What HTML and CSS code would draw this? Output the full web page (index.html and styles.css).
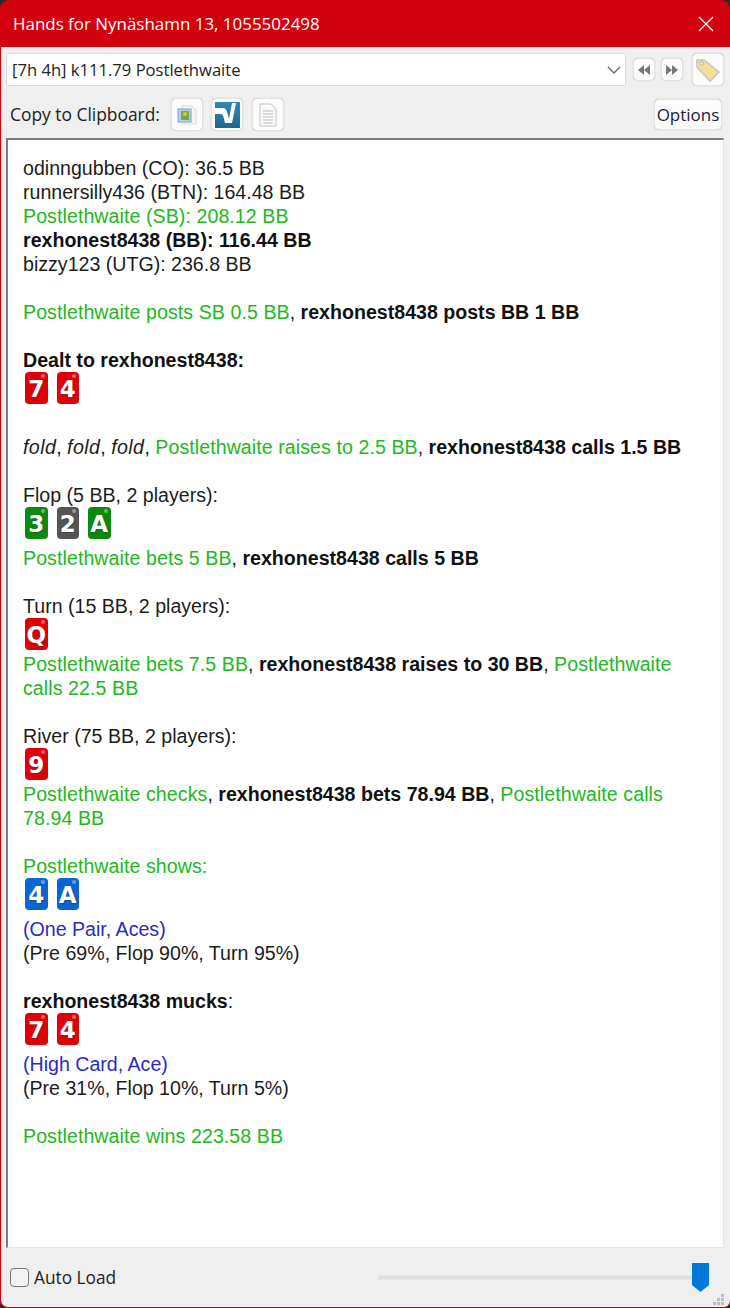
FILE: index.html
```html
<!DOCTYPE html>
<html lang="en">
<head>
<meta charset="utf-8">
<title>Hands for Nynäshamn 13, 1055502498</title>
<link rel="stylesheet" href="styles.css">
</head>
<body>
<div class="window">
  <header class="titlebar">
    <span class="title">Hands for Nynäshamn 13, 1055502498</span>
    <svg class="close" width="16" height="16" viewBox="0 0 16 16"><path d="M1 1L15 15M15 1L1 15" stroke="#fff" stroke-width="1.3" fill="none"/></svg>
  </header>
  <div class="content">
    <div class="row-combo">
      <div class="combo">
        <span>[7h 4h] k111.79 Postlethwaite</span>
        <svg width="14" height="8" viewBox="0 0 14 8"><path d="M1 1L7 7L13 1" stroke="#666" stroke-width="1.4" fill="none"/></svg>
      </div>
      <button class="btn nav nav-first"><svg width="14" height="10" viewBox="0 0 14 10"><path d="M7 0V10L1 5ZM13 0V10L7 5Z" fill="#777"/></svg></button>
      <button class="btn nav"><svg width="14" height="10" viewBox="0 0 14 10"><path d="M1 0V10L7 5ZM7 0V10L13 5Z" fill="#777"/></svg></button>
      <button class="btn tag"><svg width="26" height="26" viewBox="0 0 26 26"><path d="M2 3H9L24 15L15 24L2 10Z" fill="#f6df92" stroke="#c6c6c6" stroke-width="1.6"/><circle cx="6.500" cy="6.500" r="1.800" fill="#f2f2f2" stroke="#b0b0b0"/></svg></button>
    </div>
    <div class="row-copy">
      <span class="copy-label">Copy to Clipboard:</span>
      <button class="btn icon"><svg width="22" height="22" viewBox="0 0 22 22"><path d="M6 2H16L20 6V20H6Z" fill="#f5f5f5" stroke="#ddd"/><rect x="2" y="5" width="13" height="13" fill="#b9cdea" stroke="#7d9fd6"/><rect x="5" y="7" width="8" height="9" fill="#6fae3f"/><circle cx="9" cy="10" r="2" fill="#e3c04c"/></svg></button>
      <button class="btn icon"><svg width="25" height="26" viewBox="0 0 25 26"><defs><linearGradient id="sn" x1="0" y1="0" x2="0" y2="1"><stop offset="0" stop-color="#2f86b8"/><stop offset="1" stop-color="#1d6a92"/></linearGradient></defs><rect width="25" height="26" fill="url(#sn)"/><path d="M0 6H8C11 6 12 9 13 13L14 17L17 1H21L17 21H10C9 16 8 12 6 12H0Z" fill="#fff"/></svg></button>
      <button class="btn icon"><svg width="20" height="24" viewBox="0 0 20 24"><path d="M2 1H13L18 6V23H2Z" fill="#fafafa" stroke="#c4c4c4"/><path d="M5 8H15M5 11H15M5 14H15M5 17H15M5 20H15" stroke="#bbb"/></svg></button>
      <button class="btn options">Options</button>
    </div>
    <main class="log">
      <p>odinngubben (CO): 36.5 BB</p>
      <p>runnersilly436 (BTN): 164.48 BB</p>
      <p class="g">Postlethwaite (SB): 208.12 BB</p>
      <p class="b">rexhonest8438 (BB): 116.44 BB</p>
      <p>bizzy123 (UTG): 236.8 BB</p>
      <p class="gap"><span class="g">Postlethwaite posts SB 0.5 BB</span>, <span class="b">rexhonest8438 posts BB 1 BB</span></p>
      <p class="gap b">Dealt to rexhonest8438:</p>
      <div class="cards"><span class="card red">7</span><span class="card red">4</span></div>
      <p class="gap"><i>fold</i>, <i>fold</i>, <i>fold</i>, <span class="g">Postlethwaite raises to 2.5 BB</span>, <span class="b">rexhonest8438 calls 1.5 BB</span></p>
      <p class="gap">Flop (5 BB, 2 players):</p>
      <div class="cards"><span class="card green">3</span><span class="card gray">2</span><span class="card green">A</span></div>
      <p><span class="g">Postlethwaite bets 5 BB</span>, <span class="b">rexhonest8438 calls 5 BB</span></p>
      <p class="gap">Turn (15 BB, 2 players):</p>
      <div class="cards cards-one"><span class="card red">Q</span></div>
      <p><span class="g">Postlethwaite bets 7.5 BB</span>, <span class="b">rexhonest8438 raises to 30 BB</span>, <span class="g">Postlethwaite calls 22.5 BB</span></p>
      <p class="gap">River (75 BB, 2 players):</p>
      <div class="cards cards-one"><span class="card red">9</span></div>
      <p><span class="g">Postlethwaite checks</span>, <span class="b">rexhonest8438 bets 78.94 BB</span>, <span class="g">Postlethwaite calls 78.94 BB</span></p>
      <p class="gap g">Postlethwaite shows:</p>
      <div class="cards"><span class="card blue">4</span><span class="card blue">A</span></div>
      <p class="v">(One Pair, Aces)</p>
      <p>(Pre 69%, Flop 90%, Turn 95%)</p>
      <p class="gap"><span class="b">rexhonest8438 mucks</span>:</p>
      <div class="cards"><span class="card red">7</span><span class="card red">4</span></div>
      <p class="v">(High Card, Ace)</p>
      <p>(Pre 31%, Flop 10%, Turn 5%)</p>
      <p class="gap g">Postlethwaite wins 223.58 BB</p>
    </main>
    <footer class="bottom">
      <label class="auto"><span class="check"></span>Auto Load</label>
      <div class="slider">
        <svg class="thumb" width="17" height="29" viewBox="0 0 17 29"><path d="M0 0H17V22L8.500 29L0 22Z" fill="#0078d7"/></svg>
      </div>
      <svg class="grip" width="14" height="14" viewBox="0 0 14 14"><g fill="#bdbdbd"><rect x="10" y="1" width="3" height="3"/><rect x="6" y="5" width="3" height="3"/><rect x="10" y="5" width="3" height="3"/><rect x="2" y="9" width="3" height="3"/><rect x="6" y="9" width="3" height="3"/><rect x="10" y="9" width="3" height="3"/></g></svg>
    </footer>
  </div>
</div>
</body>
</html>
```

FILE: styles.css
```css
* { box-sizing: border-box; }
html, body { margin: 0; height: 100%; background: #2a2a2a; }
body { font-family: "Open Sans", "Noto Sans", sans-serif; }
.window {
  width: 730px; height: 1308px;
  display: flex; flex-direction: column;
  background: #d3000d;
  border-radius: 9px 9px 7px 7px;
  overflow: hidden;
  padding: 0 0 1px 1px;
}
.titlebar {
  height: 47px; flex: none;
  display: flex; align-items: center; justify-content: space-between;
  padding: 0 16px 0 12px;
  color: #fff;
}
.title { font-size: 16.950px; }
.content {
  flex: 1; min-height: 0;
  display: flex; flex-direction: column;
  background: #efefef;
  border-bottom-left-radius: 7px;
  border-bottom-right-radius: 6px;
  padding: 0 5px 0 5px;
}
.row-combo { height: 46px; flex: none; display: flex; align-items: flex-start; padding-top: 6px; }
.combo {
  width: 620px; height: 33px; flex: none;
  display: flex; align-items: center; justify-content: space-between;
  background: #fff; border: 1px solid #dcdcdc; border-radius: 2px;
  padding: 0 4px 0 5px;
  font-size: 16.600px; color: #222;
}
.btn {
  background: #fbfbfb; border: 1px solid #e2e2e2; border-radius: 5px; padding: 0;
  box-shadow: 0 0 1px rgba(0,0,0,.25);
  display: flex; align-items: center; justify-content: center;
  font-family: inherit; color: #1a1a3a;
}
.nav { width: 22px; height: 23px; margin: 5px 0 0 6px; }
.nav-first { margin-left: 7px; }
.tag { width: 32px; height: 33px; margin: 0 0 0 9px; }
.row-copy { height: 45px; flex: none; display: flex; align-items: flex-start; padding-top: 5px; }
.copy-label { font-size: 17.400px; color: #222; margin: 4px 11px 0 4px; line-height: 24px; }
.icon { width: 32px; height: 33px; margin-right: 8.500px; }
.options { width: 68px; height: 31px; margin: 1px 3px 0 auto; font-size: 17px; }
.log {
  flex: 1; min-height: 0; width: 718px;
  background: #fff;
  border-style: solid; border-color: #7c7c7c #e4e4e4 #e4e4e4 #7c7c7c;
  border-width: 2px 1px 1px 2px;
  padding: 16px 20px 0 15px;
  font: 19.600px/24px "Liberation Sans", Arial, sans-serif; color: #1c1c1c;
  overflow: hidden;
}
.log p { margin: 0; }
.log .gap { margin-top: 24px; }
.log i { letter-spacing: .4px; }
.b { font-weight: 700; color: #111; }
.g { color: #22b822; letter-spacing: .07px; }
.v { color: #2a2ac4; }
.cards { height: 39px; display: flex; gap: 9px; padding-left: 2px; }
.cards-one { height: 34px; }
.card {
  position: relative;
  width: 22.500px; height: 32px;
  border-radius: 4px;
  color: #fff; font: 700 23px/34px "DejaVu Sans", sans-serif;
  text-align: center;
  text-shadow: 1px 1px 1px rgba(60,60,60,.6);
}
.card::after { content: ""; position: absolute; top: 2px; right: 3px; width: 4px; height: 4px; border-radius: 50%; background: rgba(255,255,255,.4); }
.red { background: #e00008; }
.green { background: #0b8a0b; }
.gray { background: #555; }
.blue { background: #0a64d2; }
.bottom { height: 59px; flex: none; position: relative; display: flex; align-items: center; padding-left: 4px; }
.auto { display: flex; align-items: center; gap: 5px; font-size: 17.300px; color: #222; }
.check { width: 19px; height: 19px; border: 1.500px solid #777; border-radius: 4px; background: #f3f3f3; }
.slider { position: absolute; left: 372px; top: 27px; width: 318px; height: 5px; background: #dfdfdf; border: 1px solid #e6e6e6; }
.thumb { position: absolute; right: -14px; top: -13px; }
.grip { position: absolute; right: 0; bottom: 0; }
```
